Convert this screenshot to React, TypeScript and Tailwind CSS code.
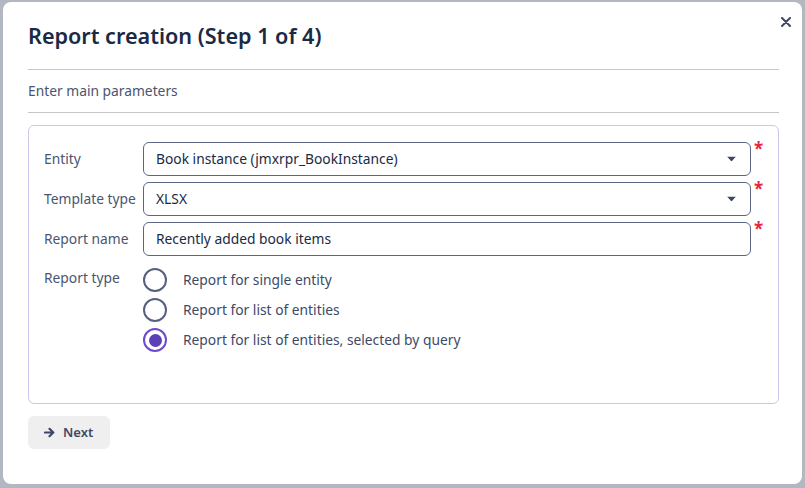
import React, { useState } from 'react';

const Caret = () => (
  <svg width="9" height="5" viewBox="0 0 9 5" className="absolute right-[14px] top-1/2 -translate-y-1/2">
    <path d="M0 0 H9 L4.5 5 Z" fill="#3d4866" />
  </svg>
);

const Field = ({ label, value, select }: { label: string; value: string; select?: boolean }) => (
  <div className="flex items-center">
    <div className="w-[99px] text-[13.8px] text-[#4a5570]">{label}</div>
    <div className="relative flex-1 h-[34px] rounded-[6px] border border-[#5b6785] bg-white flex items-center pl-[12px] text-[13.8px] text-[#1a2a44]">
      {value}
      {select && <Caret />}
    </div>
    <div className="w-[27px] self-start pl-[3px] -mt-[3px] text-[17px] font-bold leading-[20px] text-[#e8283a]">*</div>
  </div>
);

const Radio = ({ checked, label, onClick }: { checked: boolean; label: string; onClick: () => void }) => (
  <div className="flex items-center h-[30px] cursor-pointer" onClick={onClick}>
    {checked ? (
      <div className="w-[24px] h-[24px] rounded-full border-2 border-[#6a4ccc] flex items-center justify-center">
        <div className="w-[13px] h-[13px] rounded-full bg-[#5b41b5]" />
      </div>
    ) : (
      <div className="w-[24px] h-[24px] rounded-full border-2 border-[#566180]" />
    )}
    <span className="ml-[16px] text-[13.8px] text-[#3d4a66]">{label}</span>
  </div>
);

export default function App() {
  const [type, setType] = useState(2);
  const options = ['Report for single entity', 'Report for list of entities', 'Report for list of entities, selected by query'];

  return (
    <div className="w-[805px] h-[488px] bg-[#b3b7c0] pt-[2px] pl-[3px]" style={{ fontFamily: '"Noto Sans", "Open Sans", sans-serif' }}>
      <div className="relative w-[799px] h-[482px] bg-white rounded-[8px] pl-[25px] pr-[23px] pt-[20px]">
        {/* close */}
        <svg width="10" height="10" viewBox="0 0 10 10" className="absolute right-[11px] top-[15px]">
          <path d="M1 1 L9 9 M9 1 L1 9" stroke="#3d4866" strokeWidth="2" strokeLinecap="round" />
        </svg>

        <h1 className="text-[21.6px] leading-[28px] font-semibold text-[#1a2a44]">Report creation (Step 1 of 4)</h1>
        <div className="mt-[19px] h-px bg-[#c6c6c9]" />
        <div className="mt-[11px] text-[13.8px] leading-[20px] text-[#4a5570]">Enter main parameters</div>
        <div className="mt-[11px] h-px bg-[#c6c6c9]" />

        <div className="mt-[12px] h-[279px] rounded-[6px] border border-[#cdc6ec] pl-[15px] pt-[16px]">
          <div className="flex flex-col gap-[6px]">
            <Field label="Entity" value="Book instance (jmxrpr_BookInstance)" select />
            <Field label="Template type" value="XLSX" select />
            <Field label="Report name" value="Recently added book items" />
          </div>
          <div className="flex mt-[9px]">
            <div className="w-[99px] text-[13.8px] text-[#4a5570] pt-[3px]">Report type</div>
            <div className="flex flex-col">
              {options.map((o, i) => (
                <Radio key={o} label={o} checked={type === i} onClick={() => setType(i)} />
              ))}
            </div>
          </div>
        </div>

        <button className="mt-[12px] w-[82px] h-[33px] rounded-[6px] bg-[#efeff0] flex items-center pl-[16px] gap-[8px] text-[13px] font-semibold text-[#3d4866]">
          <svg width="11" height="11" viewBox="0 0 11 11">
            <path d="M1 5.5 H9 M5.5 1.8 L9.3 5.5 L5.5 9.2" stroke="#3d4866" strokeWidth="2.2" fill="none" strokeLinecap="round" strokeLinejoin="round" />
          </svg>
          Next
        </button>
      </div>
    </div>
  );
}
